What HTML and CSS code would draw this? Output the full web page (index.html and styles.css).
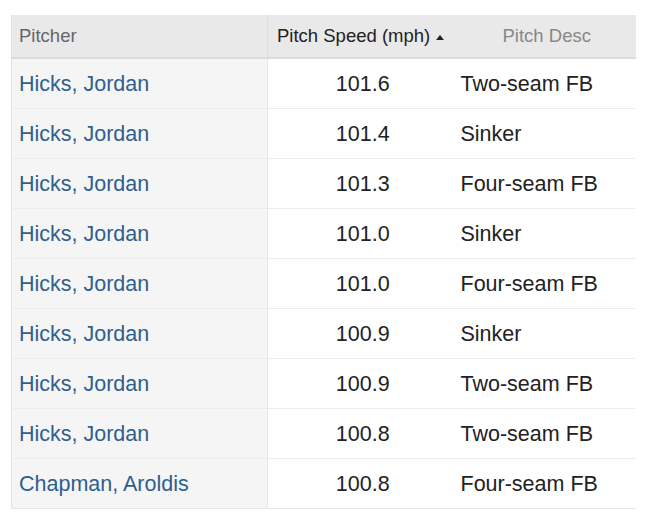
FILE: index.html
```html
<!DOCTYPE html>
<html>
<head>
<meta charset="utf-8">
<link rel="stylesheet" href="styles.css">
</head>
<body>
<table class="grid">
  <thead>
    <tr>
      <th class="c-pitcher">Pitcher</th>
      <th class="c-speed">Pitch Speed (mph)<span class="arrow"></span></th>
      <th class="c-desc">Pitch Desc</th>
    </tr>
  </thead>
  <tbody>
    <tr><td class="c-pitcher"><a>Hicks, Jordan</a></td><td class="c-speed">101.6</td><td class="c-desc">Two-seam FB</td></tr>
    <tr><td class="c-pitcher"><a>Hicks, Jordan</a></td><td class="c-speed">101.4</td><td class="c-desc">Sinker</td></tr>
    <tr><td class="c-pitcher"><a>Hicks, Jordan</a></td><td class="c-speed">101.3</td><td class="c-desc">Four-seam FB</td></tr>
    <tr><td class="c-pitcher"><a>Hicks, Jordan</a></td><td class="c-speed">101.0</td><td class="c-desc">Sinker</td></tr>
    <tr><td class="c-pitcher"><a>Hicks, Jordan</a></td><td class="c-speed">101.0</td><td class="c-desc">Four-seam FB</td></tr>
    <tr><td class="c-pitcher"><a>Hicks, Jordan</a></td><td class="c-speed">100.9</td><td class="c-desc">Sinker</td></tr>
    <tr><td class="c-pitcher"><a>Hicks, Jordan</a></td><td class="c-speed">100.9</td><td class="c-desc">Two-seam FB</td></tr>
    <tr><td class="c-pitcher"><a>Hicks, Jordan</a></td><td class="c-speed">100.8</td><td class="c-desc">Two-seam FB</td></tr>
    <tr><td class="c-pitcher"><a>Chapman, Aroldis</a></td><td class="c-speed">100.8</td><td class="c-desc">Four-seam FB</td></tr>
  </tbody>
</table>
</body>
</html>
```
FILE: styles.css
```css
html, body {
  margin: 0;
  padding: 0;
  background: #fff;
}
body {
  padding: 15px 0 0 11px;
  font-family: "Liberation Sans", Arial, sans-serif;
}
.grid {
  border-collapse: collapse;
  table-layout: fixed;
  width: 625px;
  border-left: 1px solid #e2e2e2;
  border-bottom: 1px solid #e6e6e6;
}
.grid th, .grid td {
  box-sizing: border-box;
}
.grid th {
  height: 43px;
  padding: 0;
  background: #e9e9e9;
  font-weight: normal;
  font-size: 18.5px;
  border-bottom: 2px solid #dcdcdc;
  text-align: left;
  vertical-align: middle;
}
.grid th.c-pitcher {
  width: 256px;
  padding-left: 7px;
  color: #666;
  border-right: 1px solid #dedede;
}
.grid th.c-speed {
  width: 190px;
  padding-left: 9px;
  color: #222;
}
.grid th.c-desc {
  text-align: center;
  color: #888;
}
.arrow {
  display: inline-block;
  width: 0;
  height: 0;
  margin-left: 6px;
  border-left: 4px solid transparent;
  border-right: 4px solid transparent;
  border-bottom: 5px solid #222;
  vertical-align: 2px;
}
.grid td {
  height: 50px;
  padding: 2px 0 0 0;
  font-size: 21.5px;
  color: #222;
  border-top: 1px solid #ececec;
  vertical-align: middle;
}
.grid tbody tr:first-child td {
  border-top: none;
}
.grid td.c-pitcher {
  background: #f5f5f5;
  padding-left: 7px;
  border-right: 1px solid #e8e8e8;
}
.grid td.c-pitcher a {
  color: #2e5f8e;
}
.grid td.c-speed {
  text-align: center;
}
.grid td.c-desc {
  padding-left: 3px;
}
```
